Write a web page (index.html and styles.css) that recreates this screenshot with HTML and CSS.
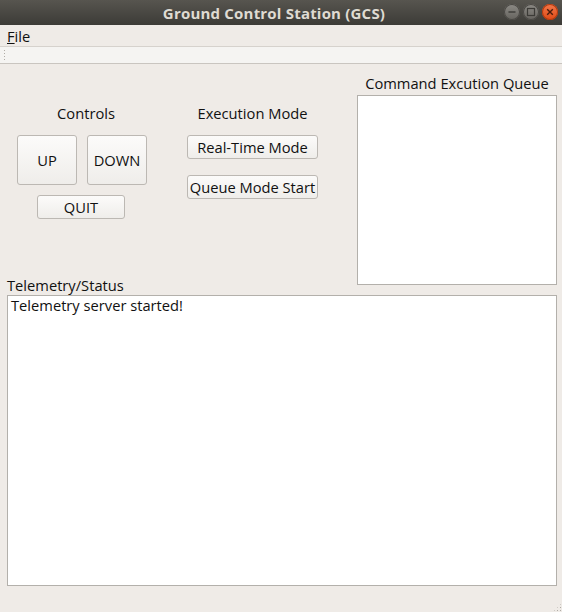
FILE: index.html
```html
<!DOCTYPE html>
<html>
<head>
<meta charset="utf-8">
<link rel="stylesheet" href="styles.css">
</head>
<body>
<div class="window">
  <div class="titlebar">
    <span class="title">Ground Control Station (GCS)</span>
    <div class="wbtns">
      <span class="wbtn min"><svg width="16" height="16" viewBox="0 0 16 16"><line x1="4.5" y1="8" x2="11.5" y2="8" stroke="#3c3b37" stroke-width="1.4"/></svg></span>
      <span class="wbtn max"><svg width="16" height="16" viewBox="0 0 16 16"><rect x="4.5" y="4.5" width="7" height="7" fill="none" stroke="#3c3b37" stroke-width="1.2"/></svg></span>
      <span class="wbtn close"><svg width="16" height="16" viewBox="0 0 16 16"><path d="M5.2 5.2 L10.8 10.8 M10.8 5.2 L5.2 10.8" stroke="#4a1c0c" stroke-width="1.4"/></svg></span>
    </div>
  </div>
  <div class="menubar"><span class="menu"><u>F</u>ile</span></div>
  <div class="toolbar"><span class="grip"></span></div>
  <div class="central">
    <div class="top">
      <div class="left">
        <div class="groups">
          <div class="group controls">
            <div class="glabel">Controls</div>
            <div class="row">
              <button class="btn big">UP</button>
              <button class="btn big">DOWN</button>
            </div>
            <button class="btn quit">QUIT</button>
          </div>
          <div class="group exec">
            <div class="glabel">Execution Mode</div>
            <button class="btn wide">Real-Time Mode</button>
            <button class="btn wide second">Queue Mode Start</button>
          </div>
        </div>
        <div class="tlabel">Telemetry/Status</div>
      </div>
      <div class="right">
        <div class="qlabel">Command Excution Queue</div>
        <div class="qbox"></div>
      </div>
    </div>
    <div class="tbox">Telemetry server started!</div>
  </div>
  <div class="statusbar"><span class="sizegrip"></span></div>
</div>
</body>
</html>
```
FILE: styles.css
```css
* { box-sizing: border-box; }
html, body { margin: 0; padding: 0; }
body {
  width: 562px;
  height: 612px;
  overflow: hidden;
  font-family: "Open Sans", "DejaVu Sans", sans-serif;
  font-size: 14.7px;
  color: #111;
  background: #efebe7;
}
.window { width: 562px; height: 612px; display: flex; flex-direction: column; }
.titlebar {
  height: 26px;
  background: linear-gradient(#57554f, #3c3b37);
  position: relative;
  display: flex;
  align-items: center;
  justify-content: center;
  padding-right: 14px;
}
.title {
  color: #dfdbd2;
  font-weight: bold;
  font-size: 15px;
  letter-spacing: 0.2px;
}
.wbtns {
  position: absolute;
  right: 4px;
  top: 4px;
  display: flex;
  gap: 3px;
}
.wbtn {
  width: 16px; height: 16px; border-radius: 50%;
  background: linear-gradient(#8c8a85, #65635e);
  display: block;
  box-shadow: inset 0 0 0 1px #4a4844;
}
.wbtn svg { display: block; }
.wbtn.close { background: linear-gradient(#f3784a, #df4a16); box-shadow: inset 0 0 0 1px #b03a10; }
.menubar {
  height: 21px;
  background: #efebe7;
  padding-left: 7px;
  display: flex;
  align-items: center;
  font-size: 14.7px;
}
.menu u { text-decoration-thickness: 1px; }
.toolbar {
  height: 18px;
  background: #f5f4f2;
  border-top: 1px solid #d6d2cd;
  border-bottom: 1px solid #c9c5c0;
  position: relative;
}
.grip {
  position: absolute; left: 3px; top: 2px;
  width: 3px; height: 11px;
  background-image: radial-gradient(circle, #b0aca6 0.7px, transparent 0.8px);
  background-size: 3px 3px;
}
.central {
  flex: 1;
  padding: 0 5px 0 7px;
  display: flex;
  flex-direction: column;
}
.top { display: flex; align-items: flex-start; }
.left {
  width: 350px;
  height: 231px;
  display: flex;
  flex-direction: column;
}
.groups { display: flex; padding-left: 10px; margin-top: 40px; }
.group { display: flex; flex-direction: column; }
.controls { width: 130px; align-items: center; }
.exec { width: 131px; margin-left: 40px; align-items: stretch; }
.glabel { line-height: 18px; height: 18px; text-align: center; margin-bottom: 13px; white-space: nowrap; }
.controls .glabel { padding-left: 8px; }
.row { display: flex; gap: 10px; }
.btn {
  font-family: inherit;
  font-size: 14.7px;
  color: #111;
  border: 1px solid #bcb8b3;
  border-radius: 3px;
  background: linear-gradient(#fcfbfa, #efedea);
  padding: 0;
  margin: 0;
  white-space: nowrap;
}
.big { width: 60px; height: 50px; }
.quit { width: 88px; height: 24px; margin-top: 10px; margin-right: 2px; }
.wide { height: 24px; width: 131px; }
.second { margin-top: 16px; }
.tlabel { margin-top: auto; line-height: 18px; margin-bottom: 1px; }
.right { width: 200px; }
.qlabel { line-height: 18px; text-align: center; margin-top: 10px; margin-bottom: 3px; white-space: nowrap; }
.qbox { height: 190px; background: #fff; border: 1px solid #b3b0ab; }
.tbox {
  height: 291px;
  background: #fff;
  border: 1px solid #b3b0ab;
  padding: 0 3px;
  line-height: 19px;
}
.statusbar { height: 27px; position: relative; }
.sizegrip {
  position: absolute; right: 0; bottom: 0;
  width: 9px; height: 9px;
  background-image: radial-gradient(circle, #b0aca6 0.7px, transparent 0.8px);
  background-size: 3px 3px;
  clip-path: polygon(100% 0, 100% 100%, 0 100%);
}
```
